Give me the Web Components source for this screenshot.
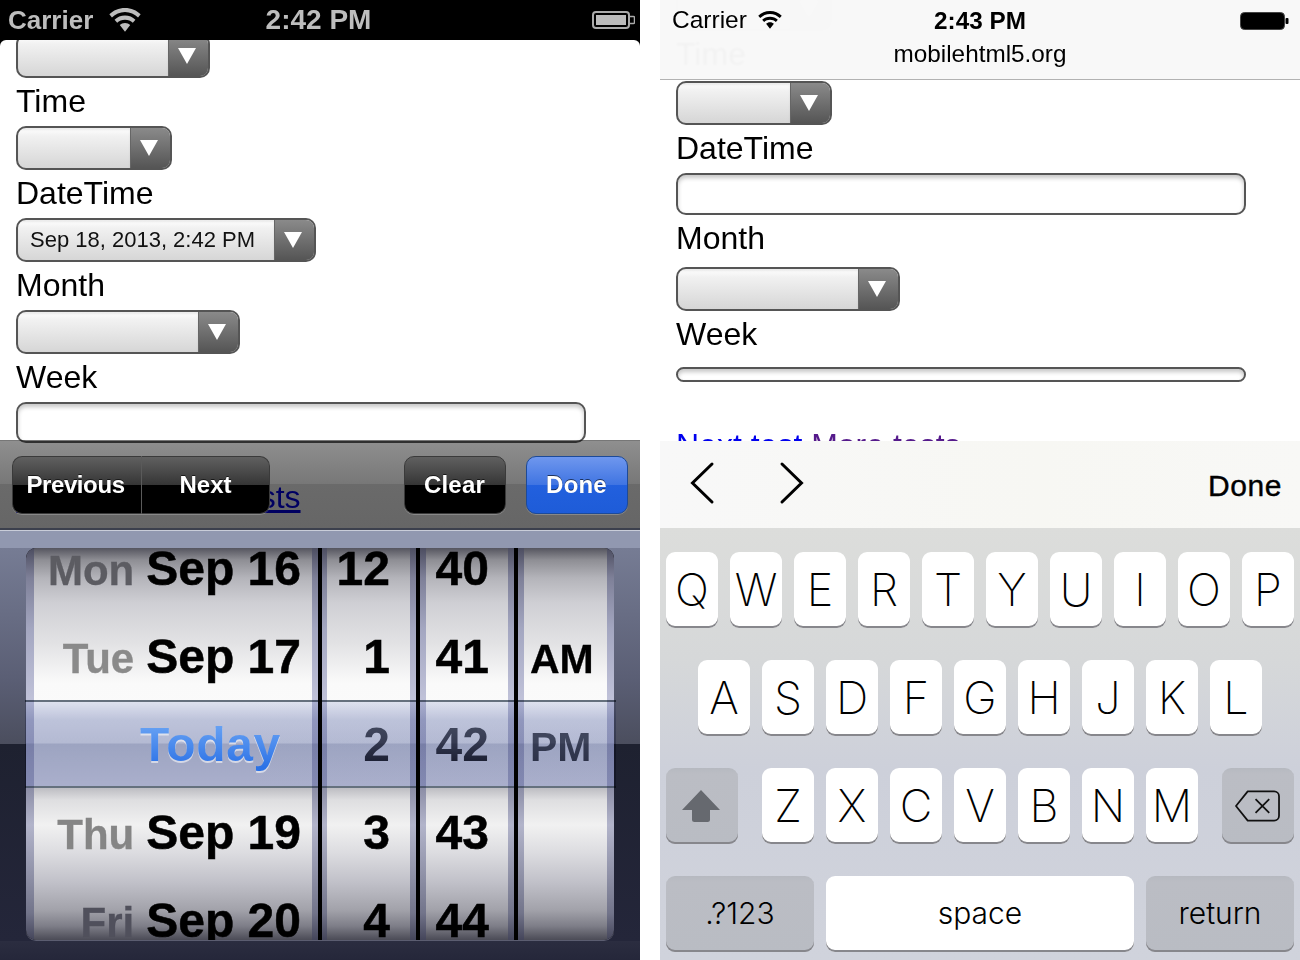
<!DOCTYPE html>
<html><head><meta charset="utf-8">
<style>
html,body{margin:0;padding:0;background:#fff}
body{width:1300px;height:960px;overflow:hidden;font-family:"Liberation Sans",Arial,sans-serif}
#stage{display:flex;gap:20px;width:1300px;height:960px}
</style></head><body>
<div id="stage">
 <old-phone>
  <form-select w="194" style="margin-top:-6px"></form-select>
  <form-label>Time</form-label>
  <form-select w="156"></form-select>
  <form-label>DateTime</form-label>
  <form-select w="300" value="Sep 18, 2013, 2:42 PM"></form-select>
  <form-label>Month</form-label>
  <form-select w="224"></form-select>
  <form-label>Week</form-label>
  <form-input w="570" h="41"></form-input>
  <link-line style="margin-top:32px"></link-line>
 </old-phone>
 <new-phone>
  <form-select w="156" style="margin-top:-13px;opacity:.35"></form-select>
  <form-label gap="6">Time</form-label>
  <form-select w="156"></form-select>
  <form-label>DateTime</form-label>
  <form-input w="570" h="42"></form-input>
  <form-label gap="8">Month</form-label>
  <form-select w="224"></form-select>
  <form-label gap="12">Week</form-label>
  <form-input w="570" h="15"></form-input>
  <link-line visited style="margin-top:41px"></link-line>
 </new-phone>
</div>
<script>
const def=(name,html,setup)=>{customElements.define(name,class extends HTMLElement{
  constructor(){super();this.attachShadow({mode:'open'}).innerHTML=html}
  connectedCallback(){setup&&setup.call(this,this.shadowRoot)}
})};
const font='"Liberation Sans",Arial,sans-serif';
const wifiPaths=`<path d="M16 0C10 0 4.800 2.300 1 6l2.500 3C6.800 5.800 11.100 3.800 16 3.800S25.200 5.800 28.500 9L31 6C27.200 2.300 22 0 16 0z"/><path d="M16 7.200c-3.900 0-7.400 1.500-10 4l2.500 3c1.900-1.900 4.500-3 7.500-3s5.600 1.100 7.500 3l2.500-3c-2.600-2.500-6.100-4-10-4z"/><path d="M16 14.300c-2 0-3.700.8-5 2l5 6.500 5-6.500c-1.300-1.200-3-2-5-2z"/>`;

def('form-label',`<style>:host{display:block;padding-top:1px;height:43px;font:32px/44px ${font};color:#000;margin-bottom:var(--g,4px)}</style><slot></slot>`,function(){
  if(this.hasAttribute('gap'))this.style.setProperty('--g',this.getAttribute('gap')+'px');
});

def('form-select',`<style>
:host{display:block;height:44px;box-sizing:border-box}
.b{display:flex;box-sizing:border-box;height:44px;border:2px solid #555;border-radius:10px;overflow:hidden;background:linear-gradient(#fff,#f1f1f1 20%,#d6d6d6)}
.v{flex:1;font:22px/40px ${font};color:#111;padding-left:12px;white-space:nowrap;box-shadow:inset 0 2px 2px rgba(0,0,0,.08)}
.a{width:40px;display:flex;align-items:center;justify-content:center;padding-right:4px;background:linear-gradient(#8a8a8a,#555);border-left:1px solid #666;box-sizing:border-box}
</style><div class="b"><div class="v"></div><div class="a"><svg width="18" height="16" viewBox="0 0 18 16"><path d="M0 0H18L9 16z" fill="#fff"/></svg></div></div>`,function(s){
  this.style.width=this.getAttribute('w')+'px';
  s.querySelector('.v').textContent=this.getAttribute('value')||'';
});

def('form-input',`<style>
:host{display:block;box-sizing:border-box;border:2px solid #555;border-radius:10px;background:#fff;box-shadow:inset 0 3px 4px rgba(0,0,0,.22)}
</style>`,function(){
  this.style.width=this.getAttribute('w')+'px';this.style.height=this.getAttribute('h')+'px';
});

def('link-line',`<style>
:host{display:block;font:32px/44px ${font};white-space:nowrap}
span{color:#00e;text-decoration:underline}
.m{color:var(--m,#00e)}
</style><span>Next test</span> <span class="m">More tests</span>`,function(){
  if(this.hasAttribute('visited'))this.style.setProperty('--m','#551a8b');
});

def('tool-button',`<style>
:host{display:flex;align-items:center;justify-content:center;box-sizing:border-box;height:58px;font:bold 24px/1 ${font};color:#fff;text-shadow:0 -1px 0 rgba(0,0,0,.6);position:relative;
 border:1px solid #3a3a3a;border-radius:10px;background:linear-gradient(#606060,#353535 50%,#000 50%,#000);box-shadow:0 1px 0 rgba(255,255,255,.22)}
:host([primary]){border-color:#1d4a98;background:linear-gradient(#6f97ee,#3f74e2 50%,#2260de 50%,#1e5cd8)}
</style><slot></slot>`);

def('date-toolbar',`<style>
:host{display:flex;align-items:flex-start;position:absolute;left:0;right:0;top:400px;height:90px;box-sizing:border-box;padding:16px 12px 0}
.bg{position:absolute;inset:0;mix-blend-mode:multiply;border-top:1px solid #777;border-bottom:2px solid #3c404d;box-sizing:border-box;background:linear-gradient(#8f8f8f,#777 50%,#6a6a6a 50%,#666)}
.seg{display:flex;position:relative;width:258px}
.seg tool-button{flex:1}
.seg tool-button:first-child{flex:0 0 130px;border-radius:10px 0 0 10px;border-right:1px solid #5a5a5a;letter-spacing:-.4px;padding-right:3px}
.seg tool-button:last-child{border-radius:0 10px 10px 0;border-left:0}
.r{margin-left:auto;display:flex;gap:20px;position:relative}
.r tool-button{width:102px;letter-spacing:.2px;padding-right:1px}
</style><div class="bg"></div><div class="seg"><tool-button>Previous</tool-button><tool-button>Next</tool-button></div>
<div class="r"><tool-button>Clear</tool-button><tool-button primary>Done</tool-button></div>`);

def('picker-wheel',`<style>
:host{display:block;box-sizing:border-box;height:392px;overflow:hidden;border-style:solid;border-color:transparent;
 border-width:0 var(--sr,6px) 0 var(--sl,5px);
 background:
 linear-gradient(#55555f 0,#8e8e94 12px,#b4b4ba 30px,#cfcfd4 55px,#e2e2e4 95px,#fafafa 135px,#fdfdfd 240px,#bdbdc2 240px,#dedee0 252px,#f1f1f1 277px,#dcdce0 305px,#c0c0c8 335px,#a2a2aa 362px,#7e7e88 378px,#4b4b56 392px) padding-box,
 linear-gradient(#4c4d60 0,#7e8098 30px,#a3a6c0 80px,#bfc1d8 150px,#c3c5dc 240px,#8c8ea6 240px,#b2b4ca 277px,#9496ac 320px,#72748a 365px,#44455a 392px) border-box}
.in{margin-top:-23px}
</style><div class="in"><slot></slot></div>`,function(){
  if(this.hasAttribute('sl'))this.style.setProperty('--sl',this.getAttribute('sl')+'px');
  if(this.hasAttribute('sr'))this.style.setProperty('--sr',this.getAttribute('sr')+'px');
});

def('wheel-row',`<style>
:host{display:flex;align-items:baseline;justify-content:flex-end;height:88px;font:bold 48px/88px ${font};color:#000;white-space:nowrap;padding-right:var(--pr,0);box-sizing:border-box}
.d{font-size:42px;color:var(--dc,#888);margin-right:12px;-webkit-text-stroke:.3px var(--dc,#888)}
.t{-webkit-text-stroke:.5px #000}
:host([sel]) .t{-webkit-text-stroke:0;background:linear-gradient(#5c6270 18px,#4a4e60 44px,#1e2234 68px);-webkit-background-clip:text;background-clip:text;color:transparent;filter:drop-shadow(0 2px 0 rgba(255,255,255,.6))}
</style><span class="d"></span><span class="t"><slot></slot></span>`,function(s){
  const d=this.getAttribute('day'),el=s.querySelector('.d');
  if(d){el.textContent=d;this.style.setProperty('--dc',this.getAttribute('dc')||'#888')}else el.remove();
  this.style.setProperty('--pr',(this.getAttribute('pr')||0)+'px');
});

def('ampm-row',`<style>
:host{display:block;height:88px;box-sizing:border-box;padding:4px 0 0 6px;font:bold 41px/84px ${font};color:#000;-webkit-text-stroke:.3px currentColor}
:host([sel]) span{-webkit-text-stroke:0;background:linear-gradient(#565c6c 18px,#2c3044 66px);-webkit-background-clip:text;background-clip:text;color:transparent;filter:drop-shadow(0 2px 0 rgba(255,255,255,.6))}
</style><span><slot></slot></span>`);

def('wheel-picker',`<style>
:host{display:block;position:relative;height:430px;box-sizing:border-box;border-top:1px solid #c9cdd9;
 background:linear-gradient(#9198b0 0,#9198b0 17px,#767c94 17px,#5a5e74 150px,#4b4e5e 213px,#1e2130 213px,#24263a 410px,#2b2d40 410px,#25273a)}
.w{display:flex;position:absolute;left:26px;top:17px;width:588px;height:392px;border-radius:10px;overflow:hidden;gap:4px;background:#000;box-shadow:0 1px 0 #5b5d70}
.sel{position:absolute;left:25px;top:169px;width:591px;height:88px;box-sizing:border-box;border-top:2px solid #66727f;border-bottom:2px solid #66727f;mix-blend-mode:multiply;
 background:linear-gradient(#e2e6f3,#c0c6de 18px,#b6bcd6 41px,#9fa6c4 42px,#abb1ce)}
.today{position:absolute;left:140px;top:170px;font:bold 48px/88px ${font};letter-spacing:.6px;white-space:nowrap;background:linear-gradient(#6aa4f4 22px,#2c72e6 66px);-webkit-background-clip:text;background-clip:text;color:transparent;filter:drop-shadow(0 2px 0 rgba(255,255,255,.55))}
</style><div class="w"><slot></slot></div><div class="sel"></div><div class="today">Today</div>`);

def('status-old',`<style>
:host{display:flex;align-items:center;box-sizing:border-box;height:40px;background:#000;color:#bdbdbd;padding:0 5px 0 8px;position:relative;font:bold 26px/40px ${font}}
.c{display:flex;align-items:center;gap:16px}
.t{position:absolute;left:0;width:637px;text-align:center;font-size:28px}
svg.wf{margin-top:-1px}
.bt{margin-left:auto}
</style><div class="c"><span>Carrier</span><svg class="wf" width="32" height="24" viewBox="1 0 30 23" fill="#bdbdbd">${wifiPaths}</svg></div><span class="t">2:42 PM</span>
<svg class="bt" width="43" height="18" viewBox="0 0 43 18"><rect x="1" y="1" width="36" height="16" rx="3" fill="none" stroke="#aaa" stroke-width="2"/><rect x="4" y="4" width="30" height="10" fill="#bbb"/><path d="M38 5.500h3.500a1 1 0 0 1 1 1v5a1 1 0 0 1-1 1H38" fill="none" stroke="#aaa" stroke-width="1.500"/></svg>`);

def('old-phone',`<style>
:host{display:flex;flex-direction:column;width:640px;height:960px;background:#000;flex:none}
.mid{position:relative;height:490px;flex:none}
.c{height:490px;background:#fff;border-radius:6px 6px 0 0;overflow:hidden;padding-left:16px;box-sizing:border-box}
</style><status-old></status-old><div class="mid"><div class="c"><slot></slot></div><date-toolbar></date-toolbar></div>
<wheel-picker>
 <picker-wheel sl="8" style="width:292px;flex:none">
  <wheel-row day="Mon" dc="#5c5c62" pr="11">Sep 16</wheel-row>
  <wheel-row day="Tue" dc="#8a8a8a" pr="11">Sep 17</wheel-row>
  <wheel-row></wheel-row>
  <wheel-row day="Thu" dc="#858585" pr="11">Sep 19</wheel-row>
  <wheel-row day="Fri" dc="#50505c" pr="11">Sep 20</wheel-row>
 </picker-wheel>
 <picker-wheel sl="5" sr="6" style="width:94px;flex:none">
  <wheel-row pr="20">12</wheel-row><wheel-row pr="20">1</wheel-row><wheel-row sel pr="20">2</wheel-row><wheel-row pr="20">3</wheel-row><wheel-row pr="20">4</wheel-row>
 </picker-wheel>
 <picker-wheel sl="6" sr="6" style="width:94px;flex:none">
  <wheel-row pr="19">40</wheel-row><wheel-row pr="19">41</wheel-row><wheel-row sel pr="19">42</wheel-row><wheel-row pr="19">43</wheel-row><wheel-row pr="19">44</wheel-row>
 </picker-wheel>
 <picker-wheel sl="6" sr="7" style="flex:1">
  <ampm-row></ampm-row><ampm-row>AM</ampm-row><ampm-row sel>PM</ampm-row><ampm-row></ampm-row><ampm-row></ampm-row>
 </picker-wheel>
</wheel-picker>`);

def('status-new',`<style>
:host{display:block;position:absolute;left:0;top:0;width:100%;height:80px;box-sizing:border-box;border-bottom:1px solid #b2b2b2;background:rgba(248,248,248,.975);-webkit-backdrop-filter:blur(1px);backdrop-filter:blur(1px);color:#000;font:24.500px/1 ${font}}
.r{display:flex;align-items:center;height:41px;padding:0 11px 0 12px;position:relative}
.c{display:flex;align-items:center;gap:11px}
.t{position:absolute;left:0;right:0;text-align:center;font-weight:bold;top:9px;font-size:24.3px}
.u{text-align:center;font-size:24.3px;line-height:26px}
.bt{margin-left:auto}
</style><div class="r"><div class="c"><span>Carrier</span><svg width="24" height="18" viewBox="1 0 30 23" fill="#000" style="margin-top:-2px">${wifiPaths}</svg></div><span class="t">2:43 PM</span>
<svg class="bt" width="49" height="18" viewBox="0 0 49 18"><rect x=".5" y=".5" width="44" height="17" rx="4" fill="#000" stroke="#444"/><rect x="45.500" y="6" width="3" height="6" rx="1" fill="#000"/></svg></div>
<div class="u">mobilehtml5.org</div>`);

def('kb-key',`<style>
:host{display:flex;align-items:center;justify-content:center;box-sizing:border-box;height:76px;width:52px;flex:none;background:#fff;border-radius:9px;box-shadow:inset 0 -2px 0 #87878c;padding-bottom:1px;
 font:200 45px/1 Inter,"Liberation Sans",sans-serif;color:#000}
:host([sm]){font-size:30px;font-weight:300;padding-bottom:3px}
:host([fn]){background:linear-gradient(#b6b9c0,#bbbdc4 6px,#b9bcc3);}
</style><slot></slot>`,function(){
  const w=this.getAttribute('w'); if(w)this.style.width=w+'px';
});

def('kb-row',`<style>:host{display:flex;gap:12px;height:76px;justify-content:center}</style><slot></slot>`);

def('ios-keyboard',`<style>
:host{display:flex;flex-direction:column;gap:32px;box-sizing:border-box;height:432px;padding:24px 6px 0;background:linear-gradient(#dcdddb 0,#d6d8d9 130px,#cdd0da 240px,#d0d3dc)}
</style><slot></slot>`);

def('kb-toolbar',`<style>
:host{display:flex;align-items:center;box-sizing:border-box;height:87px;background:linear-gradient(90deg,#f8f8f8,#f7f7f3 60%,#f8f8f6);position:relative;padding:0 18px 4px 31px}
svg{display:block;overflow:visible}
.n{display:flex;gap:68px}
.d{margin-left:auto;font:30px/1 ${font};-webkit-text-stroke:.4px #000;color:#000;letter-spacing:.6px;padding-top:7px}
</style><div class="n"><svg width="22" height="40" viewBox="0 0 22 40" fill="none" stroke="#000" stroke-width="3" stroke-linecap="round"><path d="M21 1 1.500 20 21 39"/></svg><svg width="22" height="40" viewBox="0 0 22 40" fill="none" stroke="#000" stroke-width="3" stroke-linecap="round"><path d="M1 1 20.500 20 1 39"/></svg></div><span class="d">Done</span>`);

def('new-phone',`<style>
:host{display:flex;flex-direction:column;width:640px;height:960px;background:#fff;position:relative;flex:none}
.c{height:441px;flex:none;overflow:hidden;padding-left:16px;box-sizing:border-box}
</style><div class="c"><slot></slot></div><status-new></status-new><kb-toolbar></kb-toolbar>
<ios-keyboard>
 <kb-row><kb-key>Q</kb-key><kb-key>W</kb-key><kb-key>E</kb-key><kb-key>R</kb-key><kb-key>T</kb-key><kb-key>Y</kb-key><kb-key>U</kb-key><kb-key>I</kb-key><kb-key>O</kb-key><kb-key>P</kb-key></kb-row>
 <kb-row><kb-key>A</kb-key><kb-key>S</kb-key><kb-key>D</kb-key><kb-key>F</kb-key><kb-key>G</kb-key><kb-key>H</kb-key><kb-key>J</kb-key><kb-key>K</kb-key><kb-key>L</kb-key></kb-row>
 <kb-row>
  <kb-key fn w="72" style="margin-right:12px"><svg width="38" height="32" viewBox="0 0 38 32" style="margin-left:-2px"><path d="M19 0 38 20H28V29.500a2.500 2.500 0 0 1-2.500 2.500h-13a2.500 2.500 0 0 1-2.500-2.500V20H0z" fill="#66696f"/></svg></kb-key>
  <kb-key>Z</kb-key><kb-key>X</kb-key><kb-key>C</kb-key><kb-key>V</kb-key><kb-key>B</kb-key><kb-key>N</kb-key><kb-key>M</kb-key>
  <kb-key fn w="72" style="margin-left:12px"><svg width="45" height="32" viewBox="0 0 46 32" fill="none" stroke="#111" stroke-width="1.800" stroke-linejoin="round" style="margin-left:-2px"><path d="M13 1H40a5 5 0 0 1 5 5V26a5 5 0 0 1-5 5H13L1 16z"/><path d="M21 9 35 23M35 9 21 23"/></svg></kb-key>
 </kb-row>
 <kb-row><kb-key fn sm w="148">.?123</kb-key><kb-key sm w="308">space</kb-key><kb-key fn sm w="148">return</kb-key></kb-row>
</ios-keyboard>`);
</script>
</body></html>
